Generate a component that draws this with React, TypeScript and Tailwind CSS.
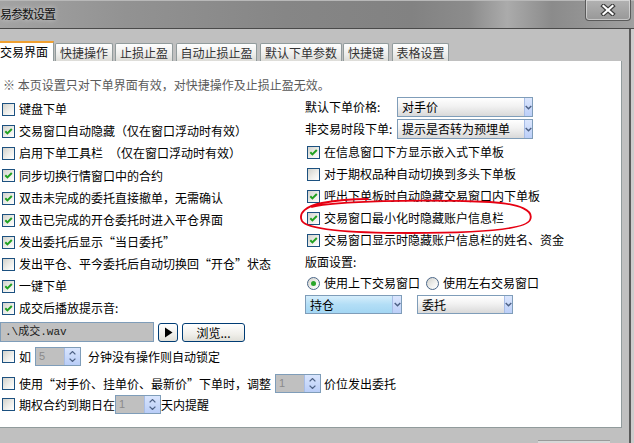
import React from "react";

const Check = ({ on }: { on?: boolean }) => (
  <span className="flex h-[13px] w-[13px] shrink-0 items-center justify-center border border-[#1c5180] bg-[linear-gradient(135deg,#d2d2cc_0%,#eeeeea_55%,#ffffff_100%)]">
    {on && (
      <svg width="11" height="11" viewBox="0 0 11 11">
        <path d="M2.3 5.3 L4.4 7.4 L8.8 3" stroke="#21a121" strokeWidth="2" fill="none" />
      </svg>
    )}
  </span>
);

const Radio = ({ on }: { on?: boolean }) => (
  <span className="flex h-[13px] w-[13px] shrink-0 items-center justify-center rounded-full border border-[#4a6688] bg-[linear-gradient(135deg,#d2d2cc_0%,#f2f2f0_60%,#ffffff_100%)]">
    {on && <span className="h-[5px] w-[5px] rounded-full bg-[#2aa52a]" />}
  </span>
);

const CRow = ({ on, h, children }: { on?: boolean; h: string; children: React.ReactNode }) => (
  <div className={`flex items-center gap-[4px] whitespace-nowrap ${h}`}>
    <Check on={on} />
    <span className="leading-[16px]">{children}</span>
  </div>
);

const Chevron = () => (
  <svg width="7" height="5" viewBox="0 0 7 5">
    <path d="M0.7 1 L3.5 3.8 L6.3 1" stroke="#4d6185" strokeWidth="1.4" fill="none" />
  </svg>
);

const Select = ({ text, cls, blue, btn }: { text: string; cls: string; blue?: boolean; btn: string }) => (
  <div
    className={`flex shrink-0 border border-[#7f9db9] ${cls} ${
      blue
        ? "bg-[linear-gradient(#d6eefc,#b3def6_50%,#a3d6f3)]"
        : "bg-[linear-gradient(#ffffff,#f2f2f2_45%,#d9d9d9)]"
    }`}
  >
    <span className="flex-1 overflow-hidden whitespace-nowrap pl-[4px] leading-[18px]">{text}</span>
    <span className={`flex items-center justify-center border-l border-[#a8bde6] bg-[linear-gradient(#dbe6fd,#bccff8)] ${btn}`}>
      <Chevron />
    </span>
  </div>
);

const Spin = ({ v }: { v: string }) => (
  <div className="flex h-[19px] w-[46px] shrink-0 border border-[#7f9db9]">
    <span className="flex-1 bg-[#c0c0c0] pl-[3px] font-['Liberation_Sans',sans-serif] text-[11px] leading-[17px] text-[#8a8a8a]">
      {v}
    </span>
    <span className="flex w-[16px] flex-col items-center justify-center gap-[3px] border-l border-[#a8bde6] bg-[linear-gradient(#d9e5fd,#b9cdf7)]">
      <svg width="7" height="4" viewBox="0 0 7 4">
        <path d="M0.6 3.4 L3.5 0.6 L6.4 3.4" stroke="#4d6185" strokeWidth="1.3" fill="none" />
      </svg>
      <svg width="7" height="4" viewBox="0 0 7 4">
        <path d="M0.6 0.6 L3.5 3.4 L6.4 0.6" stroke="#4d6185" strokeWidth="1.3" fill="none" />
      </svg>
    </span>
  </div>
);

const Tab = ({ label, cls }: { label: string; cls: string }) => (
  <div
    className={`flex h-[18px] items-center justify-center rounded-t-[2px] border border-b-0 border-[#919b9c] bg-[linear-gradient(#fefefe,#ededeb_60%,#dddcd8)] text-[#333] whitespace-nowrap ${cls}`}
  >
    {label}
  </div>
);

export default function App() {
  return (
    <div className="relative flex h-[443px] w-[634px] flex-col overflow-hidden bg-[#cdcdcd] font-['Noto_Sans_CJK_SC',sans-serif] text-[12px] text-black">
      {/* title bar */}
      <div className="flex h-[28px] shrink-0 border-t border-[#b8b8b8] bg-[linear-gradient(90deg,#a3a3a3_0%,#929292_20%,#868686_45%,#828282_65%,#8c8c8c_74%,#ababab_80%,#8b8b8b_87%,#a0a0a0_100%)]">
        <div className="ml-0 mt-[5px] h-[16px] whitespace-nowrap text-[12px] leading-[16px] tracking-[-1px] text-[#111] [text-shadow:0_0_5px_rgba(255,255,255,0.7)]">
          易参数设置
        </div>
        <div className="ml-auto mr-[3px] mt-[-1px] flex h-[21px] w-[46px] items-center justify-center rounded-b-[4px] border border-t-0 border-[#5a5a5a] bg-[linear-gradient(#b2b2b2,#989898)] shadow-[inset_0_0_0_1px_rgba(255,255,255,0.45)]">
          <svg width="16" height="12" viewBox="0 0 16 12">
            <path d="M3.5 2 L12.5 10 M12.5 2 L3.5 10" stroke="#3c3c3c" strokeWidth="4.4" strokeLinecap="square" />
            <path d="M3.5 2 L12.5 10 M12.5 2 L3.5 10" stroke="#ffffff" strokeWidth="2.2" strokeLinecap="square" />
          </svg>
        </div>
      </div>

      {/* body */}
      <div className="flex flex-1 border-t border-[#4a4a4a]">
        <div className="flex w-[631px] flex-col border-r-2 border-[#5a5a5a] bg-[#c0c0c0] pt-[12px]">
          {/* tabs */}
          <div className="flex h-[20px] items-end">
            <div className="ml-[-6px] flex h-[20px] w-[60px] items-center justify-center border-x border-t-2 border-x-[#919b9c] border-t-[#f0a030] bg-white pb-[1px] whitespace-nowrap">
              交易界面
            </div>
            <Tab label="快捷操作" cls="ml-[1px] w-[58px]" />
            <Tab label="止损止盈" cls="ml-[2px] w-[58px]" />
            <Tab label="自动止损止盈" cls="ml-[3px] w-[81px]" />
            <Tab label="默认下单参数" cls="ml-[3px] w-[82px]" />
            <Tab label="快捷键" cls="ml-[1px] w-[46px]" />
            <Tab label="表格设置" cls="ml-[3px] w-[57px]" />
          </div>

          {/* panel */}
          <div className="flex h-[367px] w-[622px] shrink-0 flex-col border-b border-r border-[#919b9c] bg-white">
            <div className="mt-[17px] flex h-[14px] items-center whitespace-nowrap pl-[3px] leading-[14px] text-[#5a5a5a]">
              ※ 本页设置只对下单界面有效，对快捷操作及止损止盈无效。
            </div>

            <div className="mt-[5px] flex">
              {/* left column */}
              <div className="flex w-[305px] shrink-0 flex-col pl-[2px] pt-[1px]">
                <CRow h="h-[22px]">键盘下单</CRow>
                <CRow h="h-[22px]" on>
                  交易窗口自动隐藏（仅在窗口浮动时有效）
                </CRow>
                <CRow h="h-[22px]">启用下单工具栏　（仅在窗口浮动时有效）</CRow>
                <CRow h="h-[23px]" on>
                  同步切换行情窗口中的合约
                </CRow>
                <CRow h="h-[22px]" on>
                  双击未完成的委托直接撤单，无需确认
                </CRow>
                <CRow h="h-[22px]" on>
                  双击已完成的开仓委托时进入平仓界面
                </CRow>
                <CRow h="h-[22px]" on>
                  发出委托后显示“当日委托”
                </CRow>
                <CRow h="h-[22px]">发出平仓、平今委托后自动切换回“开仓”状态</CRow>
                <CRow h="h-[22px]" on>
                  一键下单
                </CRow>
                <CRow h="h-[22px]" on>
                  成交后播放提示音:
                </CRow>
              </div>

              {/* right column */}
              <div className="flex flex-col">
                <div className="flex h-[20px] items-center">
                  <span className="w-[92px] whitespace-nowrap">默认下单价格:</span>
                  <Select text="对手价" cls="h-[20px] w-[136px]" btn="w-[8px]" />
                </div>
                <div className="mt-[2px] flex h-[20px] items-center">
                  <span className="w-[92px] whitespace-nowrap">非交易时段下单:</span>
                  <Select text="提示是否转为预埋单" cls="h-[20px] w-[136px]" btn="w-[8px]" />
                </div>
                <div className="mt-[2px] flex flex-col pl-[2px]">
                  <CRow h="h-[22px]" on>
                    在信息窗口下方显示嵌入式下单板
                  </CRow>
                  <CRow h="h-[22px]">对于期权品种自动切换到多头下单板</CRow>
                  <CRow h="h-[22px]" on>
                    呼出下单板时自动隐藏交易窗口内下单板
                  </CRow>
                  <CRow h="h-[22px]" on>
                    交易窗口最小化时隐藏账户信息栏
                  </CRow>
                  <CRow h="h-[22px]" on>
                    交易窗口显示时隐藏账户信息栏的姓名、资金
                  </CRow>
                </div>
                <div className="flex h-[22px] items-center whitespace-nowrap">版面设置:</div>
                <div className="flex h-[20px] items-center whitespace-nowrap pl-[2px]">
                  <Radio on />
                  <span className="ml-[4px]">使用上下交易窗口</span>
                  <span className="ml-[6px]">
                    <Radio />
                  </span>
                  <span className="ml-[4px]">使用左右交易窗口</span>
                </div>
                <div className="mt-[2px] flex h-[19px] items-center gap-[15px]">
                  <Select text="持仓" cls="h-[19px] w-[97px]" blue btn="w-[9px]" />
                  <Select text="委托" cls="h-[19px] w-[96px]" btn="w-[8px]" />
                </div>
              </div>
            </div>

            {/* sound file row */}
            <div className="mt-[3px] flex h-[20px] items-start">
              <div className="h-[20px] w-[154px] border border-[#7f9db9] bg-[#c0c0c0] pl-[4px] font-['Liberation_Mono','Noto_Sans_CJK_SC',monospace] text-[11px] leading-[18px] text-[#202020] whitespace-nowrap">
                .\成交.wav
              </div>
              <div className="ml-[4px] mt-[1px] flex h-[19px] w-[20px] items-center justify-center rounded-[3px] border border-[#003c74] bg-[linear-gradient(#ffffff,#f0efea_60%,#e0dfd8)]">
                <svg width="9" height="11" viewBox="0 0 9 11">
                  <path d="M1 0.5 L8.5 5.5 L1 10.5 Z" fill="#000" />
                </svg>
              </div>
              <div className="ml-[4px] mt-[1px] flex h-[19px] w-[63px] items-center justify-center rounded-[3px] border border-[#003c74] bg-[linear-gradient(#ffffff,#f0efea_60%,#e0dfd8)] leading-[17px] whitespace-nowrap">
                浏览...
              </div>
            </div>

            {/* lock row */}
            <div className="mt-[5px] flex h-[19px] items-center whitespace-nowrap pl-[2px]">
              <Check />
              <span className="ml-[4px]">如</span>
              <span className="ml-[4px]">
                <Spin v="5" />
              </span>
              <span className="ml-[7px]">分钟没有操作则自动锁定</span>
            </div>

            <div className="mt-[8px] flex h-[19px] items-center whitespace-nowrap pl-[2px]">
              <Check />
              <span className="ml-[4px]">使用“对手价、挂单价、最新价”下单时，调整</span>
              <span className="ml-[4px]">
                <Spin v="1" />
              </span>
              <span className="ml-[3px]">价位发出委托</span>
            </div>

            <div className="mt-[2px] flex h-[19px] items-center whitespace-nowrap pl-[2px]">
              <Check />
              <span className="ml-[4px]">期权合约到期日在</span>
              <Spin v="1" />
              <span>天内提醒</span>
            </div>
          </div>

          {/* bottom button peek */}
          <div className="ml-[538px] mt-[12px] h-[4px] w-[72px] border-t border-[#9a9a9a] bg-[#d8d8d8]" />
        </div>
      </div>

      {/* red annotation ellipse */}
      <svg className="pointer-events-none absolute left-0 top-0" width="634" height="443" viewBox="0 0 634 443">
        <path
          d="M312 207 C335 201 420 199 490 202 C522 204 534 211 530 220 C526 229 480 233 410 233 C350 233 308 230 302 221 C298 213 306 206 322 203 C338 200 355 199 368 199"
          fill="none"
          stroke="#e60012"
          strokeWidth="1.8"
          strokeLinecap="round"
        />
      </svg>
    </div>
  );
}
